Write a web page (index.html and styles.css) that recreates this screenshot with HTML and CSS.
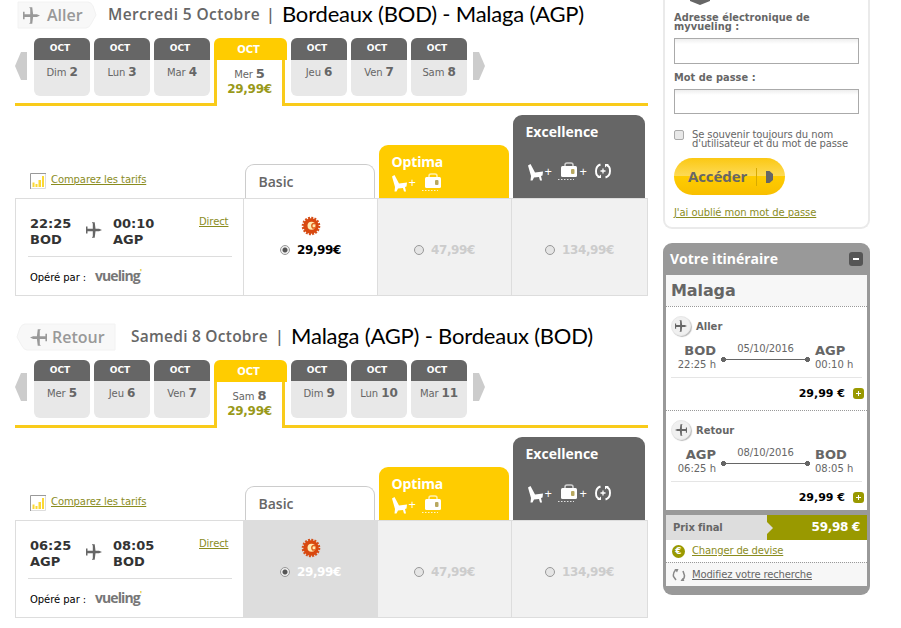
FILE: index.html
```html
<!DOCTYPE html>
<html lang="fr">
<head>
<meta charset="utf-8">
<title>Vueling</title>
<link rel="stylesheet" href="styles.css">
</head>
<body>
<svg class="defs" width="0" height="0">
  <symbol id="plane" viewBox="0 0 16 16"><path d="M0 4.500h1.500v2.300h5.300V1.500L6 .8V.2h2.700l.8 6.600h3.500L16 8l-3 1.300H9.500L8.700 15.800H6v-.6l.8-.7V9.300H1.500v2.200H0z"/></symbol>
  <symbol id="chart" viewBox="0 0 16 16"><path d="M.5 16V.5H16" fill="none" stroke="#999"/><path d="M15.500 1v14.500H1" fill="none" stroke="#ddd"/><path fill="#fbd834" d="M2.500 9.500h2V14h-2zM5.500 11h2v3h-2zM8.500 7h2.500v7H8.500zM12 3h2v11h-2z"/></symbol>
  <symbol id="seat" viewBox="0 0 16 17"><path d="M0 1.500L2.500 0 7 8.500l8-1-.5 4-1.500.5 1 4.500h-2L11 13l-5 .5-1.500 3h-2L3 12z"/></symbol>
  <symbol id="bag" viewBox="0 0 20 19"><path d="M7 5V3q0-2 2-2h4q2 0 2 2v2" fill="none" stroke="currentColor" stroke-width="1.500" opacity=".7"/><rect x="3" y="4" width="16" height="11" rx="1.500"/><rect class="tag" x="13" y="7" width="3.500" height="5" rx="1"/><path d="M0 17.500h16" stroke="currentColor" stroke-width="1.200" stroke-dasharray="1.500 1.500" opacity=".8"/></symbol>
  <symbol id="swap" viewBox="0 0 18 16"><path d="M6.500 1.500Q2 3 2 8t3 5.500M11.500 14.500Q16 13 16 8t-3-5.500" fill="none" stroke="currentColor" stroke-width="1.900"/><path d="M3 15h4v-3.500zM15 1h-4v3.500z"/><path d="M9 5.500v5M6.500 8h5" stroke="currentColor" stroke-width="1.300"/></symbol>
  <symbol id="euro" viewBox="0 0 20 20"><circle cx="10" cy="10" r="8" fill="none" stroke="#d4501a" stroke-width="2.600" stroke-dasharray="1.900 1.242"/><circle cx="10" cy="10" r="7.700" fill="#d9480f"/><circle cx="10.500" cy="9.800" r="4" fill="#ffe9b0"/><path d="M14 7.800Q10.800 6.800 10.800 9.800t3.200 2" fill="none" stroke="#e0601a" stroke-width="1.500"/></symbol>
  <symbol id="refresh" viewBox="0 0 14 14"><path d="M3.500 2Q.8 5 1.500 8.500L4 12M10 12q2.500-1 2.500-4.500L11 3" fill="none" stroke="#888" stroke-width="1.500"/><path fill="#888" d="M2.500 1H6.500L5 4.500zM12.500 13H8.500l2-3z"/></symbol>
</svg>
<div class="page">
<main class="main">

<section class="leg">
  <header class="leg-head out">
    <div class="dir"><svg class="arrow-bg" viewBox="0 0 80 28"><path d="M1 1h70q3 0 5 4l3 9-5 9q-2 4-5 4H1z"/></svg><svg class="ic"><use href="#plane"/></svg><span>Aller</span></div>
    <span class="date">Mercredi 5 Octobre</span><span class="bar">|</span><h2>Bordeaux (BOD) - Malaga (AGP)</h2>
  </header>
  <div class="days">
    <svg class="nav prev" viewBox="0 0 12 28"><path d="M12 0H6L0 14l6 14h6z"/></svg>
    <div class="day"><b>OCT</b><p>Dim <strong>2</strong></p></div>
    <div class="day"><b>OCT</b><p>Lun <strong>3</strong></p></div>
    <div class="day"><b>OCT</b><p>Mar <strong>4</strong></p></div>
    <div class="day on"><b>OCT</b><div class="sel"><p>Mer <strong>5</strong></p><em>29,99€</em></div></div>
    <div class="day"><b>OCT</b><p>Jeu <strong>6</strong></p></div>
    <div class="day"><b>OCT</b><p>Ven <strong>7</strong></p></div>
    <div class="day"><b>OCT</b><p>Sam <strong>8</strong></p></div>
    <svg class="nav next" viewBox="0 0 12 28"><path d="M0 0h6l6 14-6 14H0z"/></svg>
  </div>
  <div class="tabs">
    <div class="compare"><svg><use href="#chart"/></svg><a>Comparez les tarifs</a></div>
    <div class="tab basic">Basic</div>
    <div class="tab optima">Optima<div class="perks"><svg class="seat"><use href="#seat"/></svg><i>+</i><svg class="bag"><use href="#bag"/></svg></div></div>
    <div class="tab excel">Excellence<div class="perks"><svg class="seat"><use href="#seat"/></svg><i>+</i><svg class="bag"><use href="#bag"/></svg><i>+</i><svg class="swap"><use href="#swap"/></svg></div></div>
  </div>
  <div class="fares">
    <div class="flight">
      <div class="times"><span class="t">22:25<br>BOD</span><svg><use href="#plane"/></svg><span class="t">00:10<br>AGP</span><a>Direct</a></div>
      <div class="oper"><span>Opéré par :</span><span class="brand">vueling<sup>'</sup></span></div>
    </div>
    <div class="fare"><svg class="euro"><use href="#euro"/></svg><label><i class="radio on"></i>29,99€</label></div>
    <div class="fare off"><label><i class="radio"></i>47,99€</label></div>
    <div class="fare off"><label><i class="radio"></i>134,99€</label></div>
  </div>
</section>

<section class="leg inbound">
  <header class="leg-head back">
    <div class="dir"><svg class="arrow-bg" viewBox="0 0 100 28"><path d="M99 1H9Q6 1 4 5L1 14l5 9q2 4 5 4h88z"/></svg><svg class="ic flip"><use href="#plane"/></svg><span>Retour</span></div>
    <span class="date">Samedi 8 Octobre</span><span class="bar">|</span><h2>Malaga (AGP) - Bordeaux (BOD)</h2>
  </header>
  <div class="days">
    <svg class="nav prev" viewBox="0 0 12 28"><path d="M12 0H6L0 14l6 14h6z"/></svg>
    <div class="day"><b>OCT</b><p>Mer <strong>5</strong></p></div>
    <div class="day"><b>OCT</b><p>Jeu <strong>6</strong></p></div>
    <div class="day"><b>OCT</b><p>Ven <strong>7</strong></p></div>
    <div class="day on"><b>OCT</b><div class="sel"><p>Sam <strong>8</strong></p><em>29,99€</em></div></div>
    <div class="day"><b>OCT</b><p>Dim <strong>9</strong></p></div>
    <div class="day"><b>OCT</b><p>Lun <strong>10</strong></p></div>
    <div class="day"><b>OCT</b><p>Mar <strong>11</strong></p></div>
    <svg class="nav next" viewBox="0 0 12 28"><path d="M0 0h6l6 14-6 14H0z"/></svg>
  </div>
  <div class="tabs">
    <div class="compare"><svg><use href="#chart"/></svg><a>Comparez les tarifs</a></div>
    <div class="tab basic">Basic</div>
    <div class="tab optima">Optima<div class="perks"><svg class="seat"><use href="#seat"/></svg><i>+</i><svg class="bag"><use href="#bag"/></svg></div></div>
    <div class="tab excel">Excellence<div class="perks"><svg class="seat"><use href="#seat"/></svg><i>+</i><svg class="bag"><use href="#bag"/></svg><i>+</i><svg class="swap"><use href="#swap"/></svg></div></div>
  </div>
  <div class="fares">
    <div class="flight">
      <div class="times"><span class="t">06:25<br>AGP</span><svg><use href="#plane"/></svg><span class="t">08:05<br>BOD</span><a>Direct</a></div>
      <div class="oper"><span>Opéré par :</span><span class="brand">vueling<sup>'</sup></span></div>
    </div>
    <div class="fare picked"><svg class="euro"><use href="#euro"/></svg><label><i class="radio on"></i>29,99€</label></div>
    <div class="fare off"><label><i class="radio"></i>47,99€</label></div>
    <div class="fare off"><label><i class="radio"></i>134,99€</label></div>
  </div>
</section>
</main>

<aside class="side">
  <form class="login">
    <svg class="notch" viewBox="0 0 20 5"><path d="M0 0h20v1l-10 4L0 1z"/></svg>
    <div class="lbl">Adresse électronique de<br>myvueling :</div>
    <div class="field"></div>
    <div class="lbl pw">Mot de passe :</div>
    <div class="field second"></div>
    <div class="remember"><i class="check"></i><span>Se souvenir toujours du nom<br>d'utilisateur et du mot de passe</span></div>
    <div class="btn"><span>Accéder</span><svg viewBox="0 0 7 12"><path d="M0 0h3.500L7 3v6l-3.500 3H0z"/></svg></div>
    <a class="forgot">J'ai oublié mon mot de passe</a>
  </form>

  <div class="trip">
    <div class="trip-head"><span>Votre itinéraire</span><i class="min"></i></div>
    <div class="dest">Malaga</div>
    <div class="seg">
      <div class="seg-dir"><i class="disc"><svg><use href="#plane"/></svg></i>Aller</div>
      <div class="route"><div class="from"><b>BOD</b>22:25 h</div><div class="link">05/10/2016<i></i></div><div class="to"><b>AGP</b>00:10 h</div></div>
      <div class="price">29,99 €<i class="plus"></i></div>
    </div>
    <div class="seg last">
      <div class="seg-dir"><i class="disc"><svg class="flip"><use href="#plane"/></svg></i>Retour</div>
      <div class="route"><div class="from"><b>AGP</b>06:25 h</div><div class="link">08/10/2016<i></i></div><div class="to"><b>BOD</b>08:05 h</div></div>
      <div class="price">29,99 €<i class="plus"></i></div>
    </div>
    <div class="total"><span>Prix final</span><b>59,98 €</b></div>
    <div class="cur"><i class="coin">€</i><a>Changer de devise</a></div>
    <div class="mod"><svg><use href="#refresh"/></svg><a>Modifiez votre recherche</a></div>
  </div>
</aside>
</div>
</body>
</html>
```
FILE: styles.css
```css
* { box-sizing: border-box; }
body { margin: 0; background: #fff; color: #666; font: 10px/12px "DejaVu Sans", sans-serif; overflow: hidden; }
p, h2 { margin: 0; }
i, em { font-style: normal; }
a { color: #8a8c1e; text-decoration: underline; letter-spacing: -.08px; }
svg { display: block; flex: none; fill: currentColor; }
.defs { position: absolute; }
.page { display: flex; width: 901px; height: 628px; padding-left: 15px; overflow: hidden; }
.main { width: 633px; margin-right: 15px; flex: none; }
.leg { height: 322px; }
.flip { transform: scaleX(-1); }

.leg-head { display: flex; height: 38px; align-items: flex-start; white-space: nowrap; }
.dir { position: relative; display: flex; height: 30px; color: #999; font: 600 16px/30px "Open Sans", sans-serif; }
.out .dir { width: 93px; padding-left: 8px; }
.back .dir { width: 116px; padding-left: 15px; }
.arrow-bg { position: absolute; left: 2px; top: 1px; height: 28px; fill: #f8f8f8; stroke: #f2f2f2; z-index: -1; }
.out .arrow-bg { width: 80px; }
.back .arrow-bg { left: 1px; width: 100px; }
.ic { width: 17px; height: 17px; margin: 7px 7px 0 0; }
.back .ic { width: 17px; margin-right: 5px; }
.date { font: 600 15.500px/29px "Open Sans", sans-serif; width: 159px; letter-spacing: .4px; }
.back .date { width: 144px; letter-spacing: .25px; }
.bar { font: 600 16px/29px "Open Sans", sans-serif; width: 15px; }
.out .bar { margin-left: -1px; width: 16px; }
.back .bar { width: 16px; }
h2 { color: #000; font: 400 22px/28px Lato, sans-serif; letter-spacing: -.2px; }

.days { display: flex; height: 68px; border-bottom: 3px solid #f9cb1a; }
.nav { width: 12px; height: 28px; fill: #ccc; margin-top: 14px; }
.inbound .nav { margin-top: 13px; }
.prev { margin-right: 7px; }
.next { margin-left: 6px; }
.day { width: 56px; height: 58px; margin-right: 4px; border-radius: 6px; overflow: hidden; background: #e8e8e8; text-align: center; flex: none; }
.day:nth-child(8) { margin-right: 0; }
.day > b { display: block; height: 22px; background: #666; color: #fff; font: bold 9px/21px "DejaVu Sans", sans-serif; padding-right: 4px; }
.inbound .day:not(.on) > b { height: 21px; }
.day p { line-height: 25px; letter-spacing: -.1px; }
.day strong { font-size: 12px; }
.day.on { width: 73px; height: 68px; background: none; border-radius: 6px 6px 0 0; }
.day.on > b { background: #fc0; font-size: 10px; line-height: 23px; }
.sel { width: 71px; height: 46px; border: solid #f9cb1a; border-width: 0 3px; background: #fff; padding-top: 5px; }
.day.on p { line-height: 18px; }
.day.on strong { font-size: 13px; }
.sel em { display: block; color: #99991a; font: bold 12px/11px "DejaVu Sans", sans-serif; letter-spacing: -.3px; }

.tabs { display: flex; align-items: flex-end; height: 92px; }
.compare { display: flex; width: 230px; height: 26px; padding-left: 15px; }
.compare svg { width: 16px; height: 16px; margin: 1px 5px 0 0; }
.compare a { line-height: 16px; }
.tab { font: 600 14px/18px "Open Sans", sans-serif; width: 130px; margin-right: 4px; border-radius: 9px 9px 0 0; padding-left: 12.500px; }
.basic { height: 34px; border: 1px solid #ccc; border-bottom: 0; padding-top: 8px; }
.optima { height: 53px; padding-top: 8px; background: #fc0; color: #fff; font-weight: 700; letter-spacing: -.15px; }
.excel { width: 132px; height: 83px; margin: 0; padding-top: 8px; background: #666; color: #fff; font-weight: 700; }
.perks { display: flex; align-items: center; margin-top: 1px; height: 20px; }
.excel .perks { margin: 20px 0 0 2px; }
.perks i { font: 13px/16px "Open Sans", sans-serif; width: 8px; }
.seat { width: 16px; height: 17px; margin: 3px 1px 0 0; }
.bag { width: 20px; height: 19px; margin: 0 2px 0 5px; }
.swap { width: 18px; height: 16px; margin-left: 6px; }
.tag { fill: #b8a860; }

.fares { display: grid; grid-template-columns: 227px 134px 134px 1fr; height: 98px; border: 1px solid #ddd; }
.flight { padding: 17px 11px 0 14px; }
.times { display: flex; height: 41px; border-bottom: 1px solid #ddd; margin-left: -2px; padding-left: 2px; }
.t { width: 56px; color: #333; font: bold 13px/16px "DejaVu Sans", sans-serif; }
.times svg { width: 16px; height: 16px; margin: 6px 11px 0 0; }
.times .t:nth-child(3) { width: 86px; }
.times a { line-height: 12px; }
.oper { display: flex; color: #000; padding-top: 9px; line-height: 24px; white-space: nowrap; letter-spacing: -.05px; }
.oper > span:first-child { width: 65px; }
.brand { color: #777; font: 700 14px/20px "Open Sans", sans-serif; letter-spacing: -.9px; }
.brand sup { color: #e0c830; font-size: 9px; line-height: 0; }
.fare { border-left: 1px solid #ddd; padding-top: 17px; }
.euro { width: 20px; height: 20px; margin: 0 auto; }
.fare label { display: flex; justify-content: center; align-items: center; height: 20px; margin-top: 4px; color: #000; font: bold 12px/20px "DejaVu Sans", sans-serif; letter-spacing: -.4px; }
.fare.off { background: #f1f1f1; padding-top: 41px; }
.fare.off label { margin-top: 0; color: #ccc; }
.fare.picked { background: #ddd; }
.picked label { color: #fff; }
.radio { width: 10px; height: 10px; border: 1px solid #999; border-radius: 50%; background: #e5e5e5; margin-right: 7px; }
.radio.on { background: radial-gradient(circle, #555 0 2px, #eee 3px); }

.side { width: 207px; flex: none; }
.login { display: block; height: 229px; border: 2px solid #eaeaea; border-top: 0; border-radius: 0 0 9px 9px; padding-left: 9px; overflow: hidden; }
.notch { width: 22px; height: 5px; margin-left: 15px; }
.lbl { font: bold 9.800px/9px "DejaVu Sans", sans-serif; padding-top: 8px; height: 33px; letter-spacing: .05px; }
.field { width: 185px; height: 26px; border: 1px solid #aaa; background: linear-gradient(#eee, #fff 5px); }
.lbl.pw { height: 25px; padding-top: 9px; }
.second { height: 25px; }
.remember { display: flex; padding-top: 16px; height: 44px; line-height: 9px; white-space: nowrap; letter-spacing: -.11px; }
.check { width: 10px; height: 10px; border: 1px solid #aaa; border-radius: 2px; background: #e8e8e8; margin-right: 8px; }
.btn { display: flex; align-items: center; width: 111px; height: 37px; border-radius: 19px; background: linear-gradient(#fbc813, #fdda55 48%, #fc0 50%, #f8bf00); color: #666; padding-left: 14px; }
.btn span { width: 69px; height: 18px; border-right: 1px solid #d8aa00; font: 700 15px/16px "Open Sans", sans-serif; letter-spacing: -.1px; }
.btn svg { width: 7px; height: 12px; margin-left: 9px; }
.forgot { display: block; margin-top: 12px; }

.trip { width: 207px; height: 352px; margin-top: 14px; padding: 0 3px; border-radius: 9px; background: #999; }
.trip-head { display: flex; justify-content: space-between; height: 32px; padding: 0 4px; color: #fff; font: 700 14px/31px "Open Sans", sans-serif; }
.min { width: 14px; height: 14px; margin-top: 9px; border-radius: 3px; background: linear-gradient(#fff, #fff) center / 6px 2px no-repeat #555; }
.dest { height: 31px; background: #f7f7f7; padding-left: 5px; font: bold 16px/31px "DejaVu Sans", sans-serif; letter-spacing: -.1px; }
.seg { height: 104px; border-top: 1px dotted #999; background: #fff; padding: 9px 0 0 5px; }
.seg.last { height: 100px; }
.seg-dir { display: flex; height: 22px; font-weight: bold; line-height: 22px; }
.disc { width: 20px; height: 20px; border-radius: 50%; background: #f0f0f0; border: 1px solid #e8e8e8; box-shadow: 1px 1px 1px #bbb; padding: 3px 2px; margin-right: 5px; }
.disc svg { width: 14px; height: 12px; }
.route { display: flex; width: 191px; height: 40px; border-bottom: 1px solid #e5e5e5; padding-top: 5px; }
.route b { display: block; font-size: 13px; line-height: 16px; }
.from { width: 45px; text-align: right; line-height: 12px; }
.link { width: 89px; margin: 1px 5px 0 5px; text-align: center; line-height: 10px; letter-spacing: -.1px; }
.link i { display: block; height: 5px; margin-top: 3px; background: radial-gradient(circle at 2.5px 2.5px, #666 2.3px, transparent 2.8px), radial-gradient(circle at 86.5px 2.5px, #666 2.3px, transparent 2.8px), linear-gradient(transparent 2px, #666 2px 3px, transparent 3px); }
.price { display: flex; justify-content: flex-end; align-items: center; height: 31px; padding-right: 3px; color: #000; font: bold 11px/20px "DejaVu Sans", sans-serif; }
.plus { width: 11px; height: 11px; border-radius: 3px; margin-left: 8px; background: linear-gradient(#fff, #fff) center / 5px 1px no-repeat, linear-gradient(#fff, #fff) center / 1px 5px no-repeat #990; }
.total { display: flex; height: 30px; border-top: 5px solid #999; background: #ddd; font: bold 10px/25px "DejaVu Sans", sans-serif; letter-spacing: -.1px; }
.total span { width: 101px; padding-left: 7px; }
.total b { position: relative; flex: 1; background: #990; color: #fff; text-align: right; padding-right: 7px; font-size: 12px; letter-spacing: -.3px; }
.total b::before { content: ""; position: absolute; left: 0; top: 7px; border: solid transparent; border-width: 6px 0 6px 6px; border-left-color: #ddd; }
.cur { display: flex; align-items: center; height: 22px; background: #fff; padding-left: 6px; }
.cur a { letter-spacing: -.15px; }
.coin { width: 13px; height: 13px; border-radius: 50%; background: #990; color: #fff; font: bold 9px/13px "DejaVu Sans", sans-serif; text-align: center; margin-right: 7px; }
.mod { display: flex; align-items: center; height: 24px; border-top: 1px dotted #999; background: #f7f7f7; padding-left: 6px; }
.mod svg { width: 14px; height: 14px; margin-right: 6px; }
.mod a { color: #666; letter-spacing: -.16px; }
```
